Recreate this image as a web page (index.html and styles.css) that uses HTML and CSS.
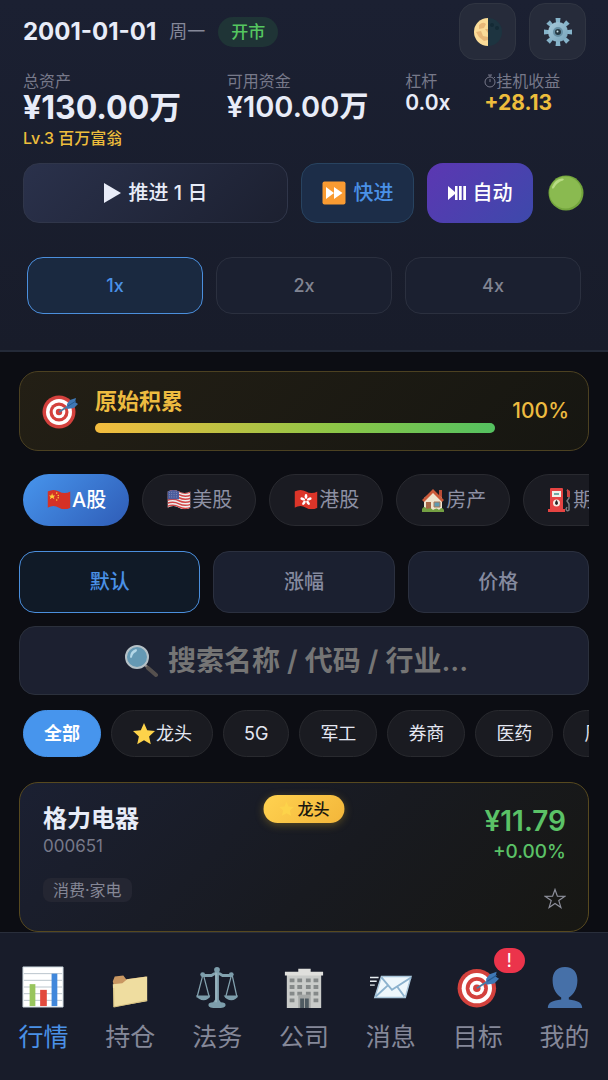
FILE: index.html
```html
<!DOCTYPE html>
<html lang="zh-CN">
<head>
<meta charset="utf-8">
<meta name="viewport" content="width=device-width, initial-scale=1">
<title>行情</title>
<link rel="stylesheet" href="styles.css">
</head>
<body>
<svg class="defs" width="0" height="0" aria-hidden="true">
  <defs>
    <linearGradient id="metal" x1="0" y1="0" x2="1" y2="1"><stop offset="0" stop-color="#a7cbdc"/><stop offset="1" stop-color="#76a3ba"/></linearGradient>
    <clipPath id="flagClip"><path d="M2 6q8-4 15 0t15 0v21q-8 4-15 0t-15 0z"/></clipPath>
    <symbol id="target" viewBox="0 0 36 36">
      <circle cx="17" cy="19" r="16.5" fill="#d3413d"/><circle cx="17" cy="19" r="13" fill="#fff"/><circle cx="17" cy="19" r="9.5" fill="#d3413d"/><circle cx="17" cy="19" r="6.3" fill="#fff"/><circle cx="17" cy="19" r="3.2" fill="#d3413d"/>
      <path d="M17 19 28 12" stroke="#477ca5" stroke-width="1.6"/>
      <path d="m25 11 3-4 6-2-1 4 3 2-4 4-7 1z" fill="#3f78b5"/><path d="m26 13 8-5" stroke="#255b91"/>
    </symbol>
    <symbol id="star" viewBox="0 0 24 24"><path d="m12 1 3.2 7.3 7.8.8-5.9 5.3 1.7 7.8L12 18.2l-6.8 4 1.7-7.8L1 9.1l7.8-.8z" fill="#fdd34a"/></symbol>
  </defs>
</svg>
<div class="app">
  <header class="top">
    <div class="dateline">
      <time class="date" datetime="2001-01-01">2001-01-01</time>
      <span class="weekday">周一</span>
      <span class="status">开市</span>
      <div class="tools">
        <button class="tool" aria-label="主题">
          <svg width="30" height="30" viewBox="0 0 30 30"><circle cx="15" cy="15" r="14" fill="#1d3440"/><path d="M15 1a14 14 0 0 0 0 28z" fill="#fbdc98"/><path d="M6 8q4-4 7-1l-2 4-5 1zM3 15l5-1 2 5 5 1v3l-4 1-5-4zM12 12h3v4z" fill="#e8b878"/><circle cx="19" cy="8" r="2" fill="#142a35"/><circle cx="24" cy="11" r="2" fill="#142a35"/></svg>
        </button>
        <button class="tool" aria-label="设置">
          <svg width="30" height="30" viewBox="0 0 30 30"><g fill="#86b4ca"><path id="tooth" d="M12.5 1h5l-.7 6h-3.6z"/><use href="#tooth" transform="rotate(45 15 15)"/><use href="#tooth" transform="rotate(90 15 15)"/><use href="#tooth" transform="rotate(135 15 15)"/><use href="#tooth" transform="rotate(180 15 15)"/><use href="#tooth" transform="rotate(225 15 15)"/><use href="#tooth" transform="rotate(270 15 15)"/><use href="#tooth" transform="rotate(315 15 15)"/></g><circle cx="15" cy="15" r="10" fill="url(#metal)"/><circle cx="15" cy="15" r="4" fill="#263943" stroke="#668fa4" stroke-width="2"/><circle cx="14.500" cy="14.500" r="1" fill="#c9e0e8"/></svg>
        </button>
      </div>
    </div>
    <dl class="stats">
      <div><dt>总资产</dt><dd class="total">¥130.00万</dd><dd class="level">Lv.3 百万富翁</dd></div>
      <div><dt>可用资金</dt><dd class="cash">¥100.00万</dd></div>
      <div><dt>杠杆</dt><dd class="small">0.0x</dd></div>
      <div><dt><svg width="12" height="14" viewBox="0 0 12 14" fill="none" stroke="currentColor"><circle cx="6" cy="8" r="5"/><path d="M6 3V1M4 1h4M6 8V5M10 4l1-1"/></svg>挂机收益</dt><dd class="small gold">+28.13</dd></div>
    </dl>
    <div class="actions">
      <button class="advance"><svg width="17" height="20" viewBox="0 0 17 20"><path d="M0 0 17 10 0 20z" fill="currentColor"/></svg>推进 1 日</button>
      <button class="forward"><svg width="24" height="24" viewBox="0 0 24 24"><rect x=".5" y=".5" width="23" height="23" rx="2" fill="#f99b32"/><path d="M4 6 12 12 4 18zM12 6 20.500 12 12 18z" fill="#fff"/></svg>快进</button>
      <button class="auto"><svg width="18" height="14" viewBox="0 0 18 14" fill="currentColor"><path d="M0 0 7 6V0h2.500v14H7V8L0 14zM11 0h2.700v14H11zM15.300 0H18v14h-2.700z"/></svg>自动</button>
      <button class="light" aria-label="运行状态"><svg width="36" height="36" viewBox="0 0 36 36"><circle cx="18" cy="18" r="17.500" fill="#72a43c"/><circle cx="17.500" cy="17.500" r="16" fill="#8aba50"/><path d="M4 12Q7 4 14 3.500q3 0 1 2Q9 7 6 13q-2 2-2-1z" fill="#b8dc83"/></svg></button>
    </div>
    <div class="speeds"><button class="on">1x</button><button>2x</button><button>4x</button></div>
  </header>

  <main class="content">
    <section class="goal">
      <svg width="36" height="36"><use href="#target"/></svg>
      <div class="goal-body"><h2 id="goal">原始积累</h2><div class="track" role="progressbar" aria-labelledby="goal" aria-valuenow="100"><div class="fill" style="width:100%"></div></div></div>
      <strong>100%</strong>
    </section>

    <nav class="markets" aria-label="市场">
      <button class="on"><svg width="26" height="26" viewBox="0 0 34 34"><g clip-path="url(#flagClip)"><path d="M0 0h34v34H0z" fill="#d53126"/><path d="m8 8 1 3h3l-2 2 1 3-3-2-3 2 1-3-2-2h3z" fill="#fbd13b"/><g fill="#fbd13b"><circle cx="14" cy="8" r="1"/><circle cx="16" cy="11" r="1"/><circle cx="16" cy="14" r="1"/><circle cx="14" cy="17" r="1"/></g></g></svg>A股</button>
      <button><svg width="26" height="26" viewBox="0 0 34 34"><g clip-path="url(#flagClip)"><path d="M0 0h34v34H0z" fill="#eee"/><path d="M0 6q9-4 17 0t17 0M0 10q9-4 17 0t17 0M0 14q9-4 17 0t17 0M0 18q9-4 17 0t17 0M0 22q9-4 17 0t17 0M0 26q9-4 17 0t17 0" fill="none" stroke="#d34647" stroke-width="2"/><path d="M0 2h17v14H0z" fill="#4b5c9c"/><path d="M4 7h12M4 10h12M4 13h12" stroke="#a6afd1" stroke-dasharray="1 2"/></g></svg>美股</button>
      <button><svg width="26" height="26" viewBox="0 0 34 34"><g clip-path="url(#flagClip)"><path d="M0 0h34v34H0z" fill="#dc3529"/><g fill="#fff"><ellipse id="petal" cx="17" cy="12.500" rx="1.800" ry="3.200"/><use href="#petal" transform="rotate(72 17 17)"/><use href="#petal" transform="rotate(144 17 17)"/><use href="#petal" transform="rotate(216 17 17)"/><use href="#petal" transform="rotate(288 17 17)"/></g></g></svg>港股</button>
      <button><svg width="26" height="26" viewBox="0 0 26 26"><path d="M19 3h3v8h-3z" fill="#b94c36"/><path d="M4 11 13 4l9 7v12H4z" fill="#eee4cf"/><path d="M2 13 13 2l11 11-2 2-9-9-9 9z" fill="#cb5a3a"/><path d="M6 15h5v8H6z" fill="#a66645"/><path d="M14 15h6v5h-6z" fill="#609ab1" stroke="#aa7757"/><path d="M2 22q2-4 5 0 4-2 6 1 4-3 6 0 3-4 5 0v2H2z" fill="#74a043"/></svg>房产</button>
      <button><svg width="26" height="26" viewBox="0 0 26 26"><path d="M3 2q0-1 1-1h11q1 0 1 1v21H3zM1 22h17v3H1z" fill="#e64442"/><rect x="5" y="4" width="9" height="6" fill="#edf1e8"/><path d="M7 6h5v2H7z" fill="#73a9a4"/><circle cx="9.500" cy="16" r="3.500" fill="#f4ece4"/><path d="M9.500 13q-3 4 0 5 3-1 0-5" fill="#252525"/><path d="M20 3l2 3v5l-2 3 2 3v6q-2 2-3-1l1-2" fill="none" stroke="#777b80" stroke-width="1.500"/><path d="m20 2 3 2v6h-3z" fill="#c94642"/></svg>期货</button>
    </nav>

    <div class="sorts"><button class="on">默认</button><button>涨幅</button><button>价格</button></div>

    <label class="search">
      <svg width="34" height="34" viewBox="0 0 34 34"><path d="m21 21 10 9" stroke="#8b8582" stroke-width="2.500"/><path d="m24 24 8 7" stroke="#55504e" stroke-width="4" stroke-linecap="round"/><circle cx="13" cy="13" r="11" fill="#6599b4" stroke="#b5c1c7" stroke-width="2"/><path d="M6 13q0-6 6-8 2 1 0 3-3 1-4 5-1 2-2 0z" fill="#b4d7e7"/></svg>
      <input type="text" aria-label="搜索" placeholder="搜索名称 / 代码 / 行业...">
    </label>

    <div class="chips">
      <button class="on">全部</button><button><svg width="24" height="24"><use href="#star"/></svg>龙头</button><button>5G</button><button>军工</button><button>券商</button><button>医药</button><button>周期</button>
    </div>

    <article class="stock">
      <span class="leader"><svg width="16" height="16"><use href="#star"/></svg>龙头</span>
      <div class="stock-head">
        <div><h3>格力电器</h3><p class="code">000651</p></div>
        <div class="quote"><p class="price">¥11.79</p><p class="change">+0.00%</p></div>
      </div>
      <div class="stock-foot"><span class="tag">消费·家电</span><button class="favorite" aria-label="收藏"><svg width="22" height="22" viewBox="0 0 22 22"><path d="m11 1.500 2.400 6.700 7.200.2-5.800 4.200 2.100 7L11 15.500l-5.900 4.100 2.100-7-5.800-4.200 7.200-.2z" fill="none" stroke="currentColor" stroke-width="1.200"/></svg></button></div>
    </article>
  </main>

  <nav class="bottom" aria-label="主导航">
    <a class="on" href="#market"><svg width="42" height="42" viewBox="0 0 44 44"><path d="M1 1h42v42H1z" fill="#fff" stroke="#c9d5dc"/><path d="M2 8h40M2 15h40M2 22h40M2 29h40M2 36h40" stroke="#b7c2c9"/><path d="M8 19h6v23H8z" fill="#98c55d"/><path d="M19 25h7v17h-7z" fill="#e24a3d"/><path d="M31 8h6v34h-6z" fill="#4087db"/></svg>行情</a>
    <a href="#positions"><svg width="42" height="42" viewBox="0 0 44 44"><path d="M4 16 6 11l9-1 3 4 21-3v4L5 21z" fill="#c99762"/><path d="m4 19 10-1 5-4 21-3v26L5 43z" fill="#efdda0"/><path d="M5 23v20l35-7" fill="none" stroke="#d6c080"/></svg>持仓</a>
    <a href="#legal"><svg width="42" height="42" viewBox="0 0 44 44"><g fill="none" stroke="#83a2af"><path d="M6 10h10q6-5 12 0h10" stroke-width="3"/><path d="M7 10 1 33M8 10l6 23M37 10l-6 23M38 10l5 23" stroke-width="1.300"/><path d="M22 6v32" stroke-width="4"/></g><g fill="#7d9eac"><circle cx="22" cy="4" r="3"/><circle cx="7" cy="9" r="2.500"/><circle cx="37" cy="9" r="2.500"/><path d="M0 31h15q-2 5-7 5t-8-5zM29 31h15q-2 5-7 5t-8-5zM13 41q0-3 5-3l2-3h4l2 3q5 0 5 3 0 3-9 3t-9-3z"/></g><path d="M21 7v31" stroke="#aec5cd"/></svg>法务</a>
    <a href="#company"><svg width="42" height="42" viewBox="0 0 44 44"><path d="M4 8h36v36H4z" fill="#c9cbc9"/><path d="M2 6h40v4H2zM16 3h13v4H16z" fill="#dfdfdc"/><path d="M7 13h5v4H7zM15 13h5v4h-5zM24 13h5v4h-5zM32 13h5v4h-5zM7 20h5v4H7zM15 20h5v4h-5zM24 20h5v4h-5zM32 20h5v4h-5zM7 27h5v4H7zM15 27h5v4h-5zM24 27h5v4h-5zM32 27h5v4h-5zM7 34h5v4H7zM32 34h5v4h-5z" fill="#858989"/><path d="M16 30h13v14H16z" fill="#a4a7a6"/><path d="M18 34h4v10h-4zM23 34h4v10h-4z" fill="#4f5b62"/></svg>公司</a>
    <a href="#messages"><svg width="42" height="42" viewBox="0 0 44 44"><path d="M12 11h31l-6 22H5z" fill="#eef7fc" stroke="#aac6da" stroke-width="1.500"/><path d="m12 12 11 13L43 12M6 32l13-12M36 32l-8-11" fill="none" stroke="#8cb2ce" stroke-width="2"/><path d="M0 12h9M0 16h7M0 20h5" stroke="#e7edf1" stroke-width="1.500"/></svg>消息</a>
    <a href="#goals"><span class="nav-icon"><svg width="42" height="42"><use href="#target"/></svg><b class="alert">!</b></span>目标</a>
    <a href="#profile"><svg width="42" height="42" viewBox="0 0 44 44"><path d="M22 1c-9 0-13 6-13 14 0 9 4 15 9 18v2C9 36 4 38 4 44h36c0-6-5-8-14-9v-2c5-3 9-9 9-18C35 7 31 1 22 1z" fill="#4670a8"/></svg>我的</a>
  </nav>
</div>
</body>
</html>
```
FILE: styles.css
```css
* { box-sizing: border-box; }
body, h2, h3, p, dl, dd { margin: 0; }
body {
  background: #0c0d13;
  color: #e8ecf8;
  font-family: Inter, "Noto Sans CJK SC", sans-serif;
  font-size: 20px;
  line-height: 24px;
}
button, input { font: inherit; color: inherit; }
button {
  display: inline-flex;
  align-items: center;
  justify-content: center;
  flex-shrink: 0;
  padding: 0;
  border: 1px solid #2b303f;
  background: #1b2030;
  white-space: nowrap;
}
svg { display: block; flex-shrink: 0; }
.defs { position: absolute; }
.app { display: flex; flex-direction: column; height: 100vh; }

.top {
  flex-shrink: 0;
  padding: 3px 22px 36px 23px;
  border-bottom: 2px solid #242a38;
  background: linear-gradient(#1b2032, #181c2a);
}
.dateline { display: flex; align-items: center; gap: 13px; }
.date { font-size: 24px; font-weight: 700; }
.weekday { color: #858899; font-size: 18px; }
.status {
  padding: 3px 13px;
  border-radius: 16px;
  background: #1f3436;
  color: #55c760;
  font-size: 17px;
  font-weight: 500;
}
.tools { display: flex; gap: 13px; margin-left: auto; }
.tool { width: 57px; height: 57px; border-radius: 16px; background: #262b3a; border-color: #303542; }

.stats { display: grid; grid-template-columns: 204fr 179fr 79fr 102fr; margin: 11px 0 12px; }
.stats dt { display: flex; align-items: center; height: 20px; color: #77798a; font-size: 16px; line-height: 20px; white-space: nowrap; }
.stats dd { font-weight: 600; white-space: nowrap; }
.stats .total { font-size: 32px; line-height: 34px; font-weight: 700; }
.cash { font-size: 29px; line-height: 32px; }
.small { font-size: 21px; }
.gold, .level { color: #edbd3c; }
.stats .gold { font-weight: 700; }
.stats .level { font-size: 16px; line-height: 26px; font-weight: 500; }

.actions { display: flex; gap: 13px; }
.actions button { height: 60px; border-radius: 16px; gap: 8px; font-weight: 500; }
.actions .advance { flex: 1; background: linear-gradient(135deg, #2a314b, #1c2030); border-color: #30364a; }
.actions .forward { width: 113px; background: #1c2d48; border-color: #284360; color: #4a91e7; }
.actions .auto { width: 106px; border: 0; background: linear-gradient(135deg, #5c37b2, #3d49ab); color: #fff; gap: 7px; }
.actions .light { width: 40px; border: 0; background: none; }

.speeds { display: flex; gap: 13px; padding: 34px 5px 0 4px; }
.speeds button { flex: 1; height: 57px; border-radius: 16px; color: #818492; font-size: 18px; font-weight: 500; }
.speeds .on, .sorts .on { border-color: #4b8fdd; color: #4a91e7; }
.speeds .on { background: #1a2940; }

.content { flex: 1; min-height: 0; overflow: hidden; padding: 19px 19px 0; }
.goal {
  display: flex;
  align-items: center;
  gap: 17px;
  height: 80px;
  padding: 0 19px 0 22px;
  border: 1px solid #4c4121;
  border-radius: 19px;
  background: linear-gradient(135deg, #231f15, #161611);
  color: #edbb40;
}
.goal-body { flex: 1; }
.goal h2 { font-size: 22px; line-height: 24px; font-weight: 600; margin-bottom: 10px; }
.track { height: 10px; border-radius: 5px; background: #26291e; }
.fill { height: 10px; border-radius: 5px; background: linear-gradient(90deg, #f4bc3e, #8dc747 60%, #54c160); }
.goal strong { font-size: 21px; font-weight: 500; }

.markets, .chips { display: flex; overflow: hidden; padding: 0 4px; }
.markets { gap: 13px; margin-top: 23px; }
.markets button { height: 52px; padding: 0 23px; border-radius: 26px; background: #1a1b22; border-color: #292a30; color: #8d90a3; }
.markets .on { border: 0; background: linear-gradient(135deg, #4795ed, #2f5cb6); color: #fff; font-weight: 500; }

.sorts { display: flex; gap: 13px; margin: 25px 0 13px; }
.sorts button { flex: 1; height: 62px; border-radius: 16px; color: #858a9f; font-weight: 500; }
.sorts .on { background: #101a27; color: #4a91e7; }

.search {
  display: flex;
  align-items: center;
  justify-content: center;
  gap: 10px;
  height: 69px;
  border: 1px solid #2b303c;
  border-radius: 16px;
  background: #1c2030;
}
.search input { width: 316px; padding: 0; border: 0; outline: 0; background: none; font-size: 28px; line-height: 40px; font-weight: 600; }
.search input::placeholder { color: #757575; opacity: 1; }

.chips { gap: 10px; margin: 15px 0 25px; }
.chips button { height: 47px; padding: 0 20px; border-radius: 24px; background: #1a1b21; border-color: #292a2f; color: #e4e7f1; font-size: 18px; }
.chips .on { border-color: #4795ed; background: #4795ed; color: #fff; font-weight: 600; }

.stock {
  position: relative;
  height: 150px;
  padding: 23px 22px 0 23px;
  border: 1px solid #57491f;
  border-radius: 19px;
  background: linear-gradient(135deg, #1b2032, #181a20 55%, #171713);
}
.leader {
  position: absolute;
  top: 12px;
  left: 50%;
  transform: translateX(-50%);
  display: flex;
  align-items: center;
  gap: 3px;
  height: 28px;
  padding: 0 15px;
  border-radius: 14px;
  background: linear-gradient(135deg, #ffd250, #f3b63a);
  box-shadow: 0 2px 9px #a5842777;
  color: #19170f;
  font-size: 16px;
  font-weight: 500;
  white-space: nowrap;
}
.stock-head, .stock-foot { display: flex; justify-content: space-between; }
.stock h3 { font-size: 24px; line-height: 26px; font-weight: 600; }
.code { color: #777989; font-size: 17px; line-height: 28px; }
.quote { color: #5bc267; text-align: right; }
.price { font-size: 28px; line-height: 30px; font-weight: 600; }
.change { font-size: 19px; line-height: 32px; font-weight: 500; }
.stock-foot { align-items: flex-start; margin-top: 10px; }
.tag { padding: 0 10px; border-radius: 8px; background: #242632; color: #858796; font-size: 16px; }
.favorite { height: 42px; border: 0; background: none; color: #8d8f9b; }

.bottom {
  display: grid;
  grid-template-columns: repeat(7, 1fr);
  flex-shrink: 0;
  height: 148px;
  border-top: 1px solid #292e3b;
  background: #181c2a;
}
.bottom a {
  display: flex;
  flex-direction: column;
  align-items: center;
  gap: 11px;
  padding-top: 33px;
  color: #858899;
  font-size: 25px;
  line-height: 36px;
  text-decoration: none;
}
.bottom .on { color: #4a91e7; }
.nav-icon { position: relative; }
.alert {
  position: absolute;
  top: -18px;
  right: -26px;
  width: 31px;
  border-radius: 13px;
  background: #eb344b;
  color: #fff;
  font-size: 19px;
  line-height: 25px;
  font-weight: 400;
  text-align: center;
}
```
